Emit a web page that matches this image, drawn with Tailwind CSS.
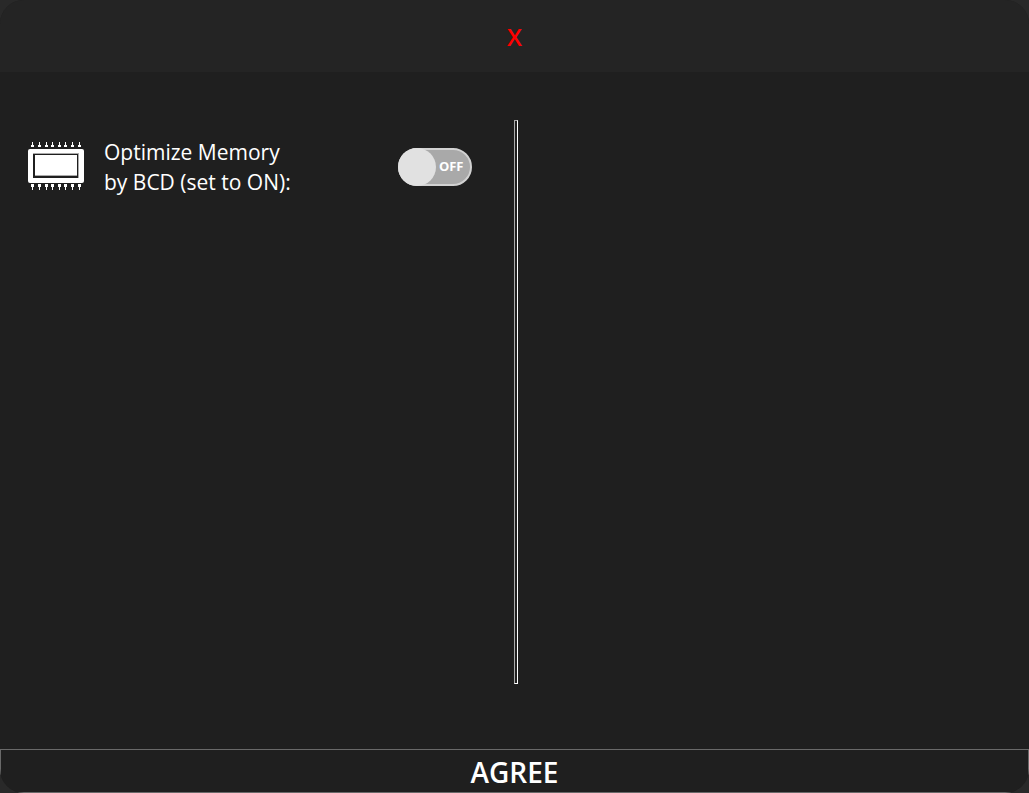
<!DOCTYPE html>
<html lang="en">
<head>
<meta charset="utf-8">
<title>Optimize Memory</title>
<script src="https://cdn.jsdelivr.net/npm/@tailwindcss/browser@4"></script>
</head>
<body class="bg-[#292929] font-['Open_Sans','Noto_Sans',sans-serif] text-white">
<div class="flex min-h-screen flex-col overflow-hidden rounded-3xl bg-[#1f1f1f]">
  <header class="flex h-18 items-center justify-center bg-[#242424]">
    <button type="button" aria-label="Close" class="px-3 pt-0.5 text-2xl font-semibold text-[#ff0000]">X</button>
  </header>
  <main class="grid flex-1 grid-cols-[1fr_4px_1fr] pt-12 pb-[65px] pl-0.5">
    <section class="flex items-start justify-between pt-4 pr-[42px] pl-[26px]">
      <div class="flex items-start gap-5">
        <svg class="mt-1.5 h-12 w-14" viewBox="0 0 56 48" fill="#fff" shape-rendering="crispEdges" aria-hidden="true">
          <path d="M4 0h1v3h1v2H3V3h1zM11 0h1v3h1v2h-3V3h1zM18 0h1v3h1v2h-3V3h1zM24 0h1v3h1v2h-3V3h1zM31 0h1v3h1v2h-3V3h1zM37 0h1v3h1v2h-3V3h1zM44 0h1v3h1v2h-3V3h1zM51 0h1v3h1v2h-3V3h1z"/>
          <path d="M3 42h3v3H5v3H4v-3H3zM10 42h3v3h-1v3h-1v-3h-1zM17 42h3v3h-1v3h-1v-3h-1zM23 42h3v3h-1v3h-1v-3h-1zM30 42h3v3h-1v3h-1v-3h-1zM36 42h3v3h-1v3h-1v-3h-1zM43 42h3v3h-1v3h-1v-3h-1zM50 42h3v3h-1v3h-1v-3h-1z"/>
          <rect y="7" width="56" height="34" rx="2" shape-rendering="auto"/>
          <path fill="#1f1f1f" fill-rule="evenodd" d="M5 11h46v25H5zM7 13v21h42V13z"/>
          <path fill="#aaa" d="M5 11h46v1H5zM7 34h42v-1H7zM50 12h1v24h-1z"/>
        </svg>
        <label for="memory" class="pt-px text-[21px] leading-[30px]">Optimize Memory<br>by BCD (set to ON):</label>
      </div>
      <div class="relative mt-3 h-[38px] w-[74px]">
        <input id="memory" type="checkbox" role="switch" class="block h-full w-full appearance-none rounded-full border-2 border-[#d2d2d2] bg-[#a9a9a9]">
        <span class="pointer-events-none absolute top-0 left-0 size-[38px] rounded-full bg-[#e1e1e1]"></span>
        <span class="pointer-events-none absolute inset-y-0 right-2 flex items-center text-[13px] font-bold">OFF</span>
      </div>
    </section>
    <div class="border border-t-[#aaa] border-r-white border-b-white border-l-[#aaa] bg-[#1f1f1f]"></div>
    <section></section>
  </main>
  <button type="button" class="h-11 border border-[#696969] bg-[#1f1f1f] pt-0.5 text-[28px] leading-10 font-semibold">AGREE</button>
</div>
</body>
</html>
